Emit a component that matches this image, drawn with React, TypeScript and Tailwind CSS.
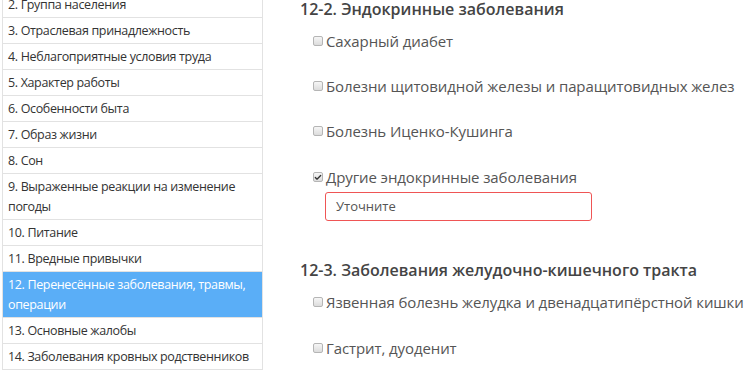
import { Check } from 'lucide-react';

const MENU = [
  '2. Группа населения',
  '3. Отраслевая принадлежность',
  '4. Неблагоприятные условия труда',
  '5. Характер работы',
  '6. Особенности быта',
  '7. Образ жизни',
  '8. Сон',
  '9. Выраженные реакции на изменение погоды',
  '10. Питание',
  '11. Вредные привычки',
  '12. Перенесённые заболевания, травмы, операции',
  '13. Основные жалобы',
  '14. Заболевания кровных родственников',
];

const ACTIVE = 10;

function Box({ checked }: { checked?: boolean }) {
  return (
    <span className="w-[10px] h-[10px] shrink-0 rounded-[2px] border border-[#b5b5b5] bg-gradient-to-b from-[#f6f6f6] to-[#dcdcdc] flex items-center justify-center">
      {checked && <Check className="w-[9px] h-[9px] text-[#333]" strokeWidth={4} />}
    </span>
  );
}

function Option({ label, checked, className = '' }: { label: string; checked?: boolean; className?: string }) {
  return (
    <label className={`flex items-center gap-[3px] pl-[13px] h-[20px] leading-[20px] text-[15px] tracking-[-0.1px] whitespace-nowrap text-[#555] ${className}`}>
      <Box checked={checked} />
      <span>{label}</span>
    </label>
  );
}

export default function App() {
  return (
    <div className="w-[750px] h-[380px] overflow-hidden bg-white flex" style={{ fontFamily: '"Open Sans", "Noto Sans", sans-serif' }}>
      <ul className="ml-[2px] w-[261px] shrink-0 -mt-[9px] self-start border-l border-r border-b border-[#e2e2e2] text-[12.5px] tracking-[-0.35px] leading-[20px] text-[#333]">
        {MENU.map((item, i) => (
          <li key={item} className={`px-[5px] pt-[3px] pb-[2px] border-t border-[#e2e2e2] ${i === ACTIVE ? 'bg-[#5aaef7] text-white border-[#5aaef7]' : ''}`}>
            {item}
          </li>
        ))}
      </ul>

      <div className="pl-[37px] flex-1">
        <h3 className="h-[18px] leading-[18px] text-[16px] font-semibold text-[#444]">12-2. Эндокринные заболевания</h3>
        <Option className="mt-[13px]" label="Сахарный диабет" />
        <Option className="mt-[25px]" label="Болезни щитовидной железы и паращитовидных желез" />
        <Option className="mt-[25px]" label="Болезнь Иценко-Кушинга" />
        <Option className="mt-[26px]" label="Другие эндокринные заболевания" checked />
        <div className="ml-[25px] mt-[5px] w-[267px] h-[29px] rounded-[3px] border border-[#ef5555] flex items-center px-[10px] text-[13px] text-[#555]">
          Уточните
        </div>

        <h3 className="mt-[39px] h-[20px] leading-[20px] text-[16px] font-semibold text-[#444] whitespace-nowrap">12-3. Заболевания желудочно-кишечного тракта</h3>
        <Option className="mt-[12px]" label="Язвенная болезнь желудка и двенадцатипёрстной кишки" />
        <Option className="mt-[26px]" label="Гастрит, дуоденит" />
      </div>
    </div>
  );
}
